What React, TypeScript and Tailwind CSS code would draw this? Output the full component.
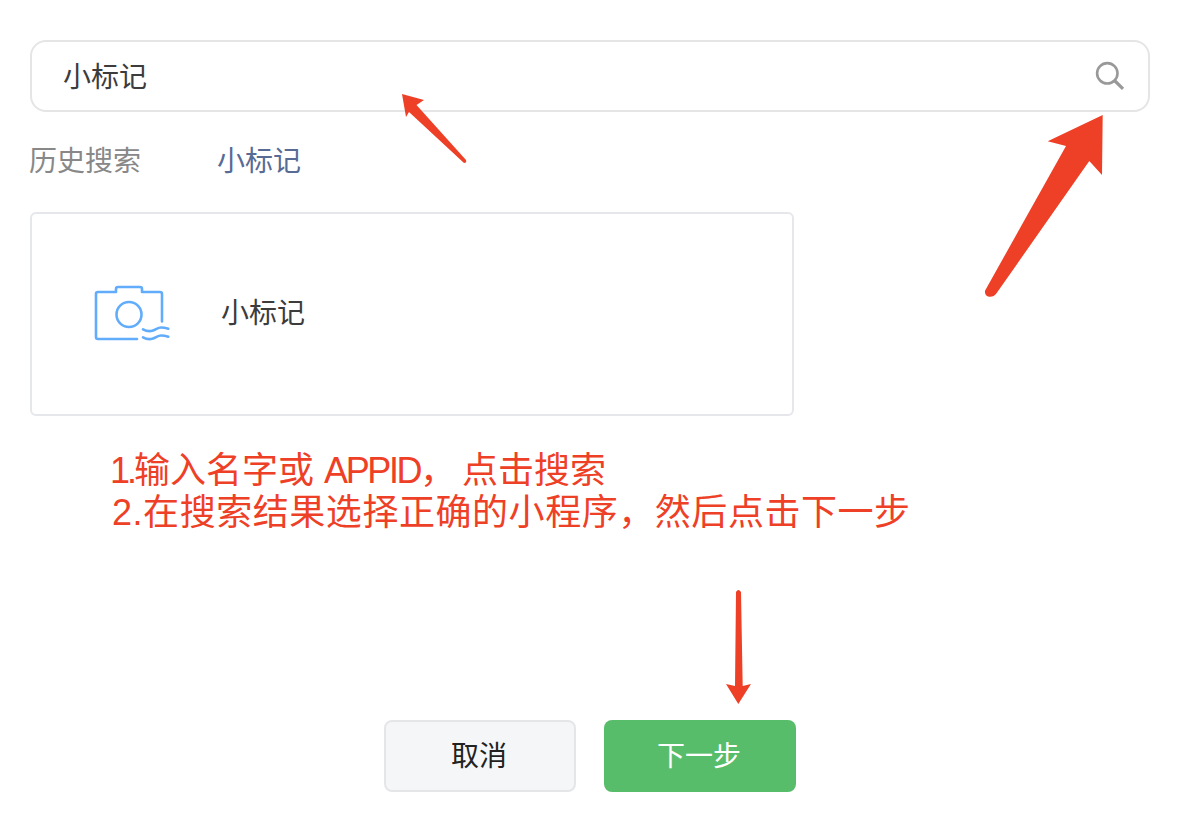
const font = "font-['Liberation_Sans','Noto_Sans_CJK_SC',sans-serif]";

function SearchIcon() {
  return (
    <svg width="32" height="32" viewBox="0 0 32 32" fill="none" stroke="#999999" strokeWidth="2.6">
      <circle cx="13.3" cy="13.3" r="10.2" />
      <path d="M21 21L29 28.8" strokeWidth="3.2" />
    </svg>
  );
}

function CameraIcon() {
  return (
    <svg width="76" height="60" viewBox="0 0 76 60" fill="none" stroke="#62adfb" strokeWidth="2.6" strokeLinecap="round" strokeLinejoin="round">
      <path d="M43 55H4a2 2 0 0 1-2-2V10a2 2 0 0 1 2-2h18V5a2 2 0 0 1 2-2h22a2 2 0 0 1 2 2v3h18a2 2 0 0 1 2 2v27.500" />
      <circle cx="35" cy="30.500" r="12.500" />
      <path d="M49 45.300C52 47 56 47.500 59 46.500S64 43.500 67 43.500 72 44 74.300 44.700" />
      <path d="M49 53.300C52 55 56 55.500 59 54.500S64 51.500 67 51.500 72 52 74.300 52.700" />
    </svg>
  );
}

function Arrows() {
  return (
    <svg className="absolute left-0 top-0 pointer-events-none" width="1182" height="840" viewBox="0 0 1182 840" fill="#ee4026">
      <path d="M402 94L424 100L416.500 105L466 160Q467 163 464 163L409 112L406 117Z" />
      <path d="M1102.700 115L1047.700 141.300L1066 146L985 290.700Q984.500 295 988 296.500Q993 298 996.700 293L1089.300 161L1102 175Z" />
      <path d="M736 592Q738.300 588 741 592L742.700 686L751 684L738.300 704L726 684L735 686Z" />
    </svg>
  );
}

export default function App() {
  return (
    <div className={`relative w-[1182px] h-[840px] bg-white overflow-hidden pl-[30px] pt-[40px] ${font}`}>
      <div className="w-[1120px] h-[72px] border-2 border-[#e5e5e5] rounded-[16px] flex items-center justify-between pl-[31px] pr-[22px]">
        <span className="pt-[3px] text-[28px] text-[#3c3c3c]">小标记</span>
        <SearchIcon />
      </div>

      <div className="flex items-center h-[40px] mt-[30px] text-[28px] leading-[40px]">
        <span className="w-[188px] -ml-[1px] text-[#888888]">历史搜索</span>
        <span className="text-[#576b95]">小标记</span>
      </div>

      <div className="w-[764px] h-[204px] mt-[30px] border-2 border-[#e5e7eb] rounded-[6px] flex items-center pl-[62px]">
        <CameraIcon />
        <span className="ml-[51px] text-[28px] text-[#3c3c3c]">小标记</span>
      </div>

      <div className="ml-[80px] mt-[34px] text-[36px] leading-[42px] text-[#ee4026]">
        <p>
          <span className="tracking-[-3px]">1.</span>输入名字或 <span className="tracking-[-2.400px]">APPID</span>
          <span className="tracking-[6px]">，</span>点击搜索
        </p>
        <p className="ml-[2px] tracking-[0.55px]">2.在搜索结果选择正确的小程序，然后点击下一步</p>
      </div>

      <div className="absolute left-[384px] top-[720px] flex gap-[28px]">
        <button className="w-[192px] h-[72px] pt-[2px] pr-[2px] rounded-[8px] border-2 border-[#e5e6e8] bg-[#f5f6f8] text-[28px] text-[#222222]">取消</button>
        <button className="w-[192px] h-[72px] pt-[2px] pr-[2px] rounded-[8px] bg-[#58bd6a] text-[28px] text-white">下一步</button>
      </div>

      <Arrows />
    </div>
  );
}
